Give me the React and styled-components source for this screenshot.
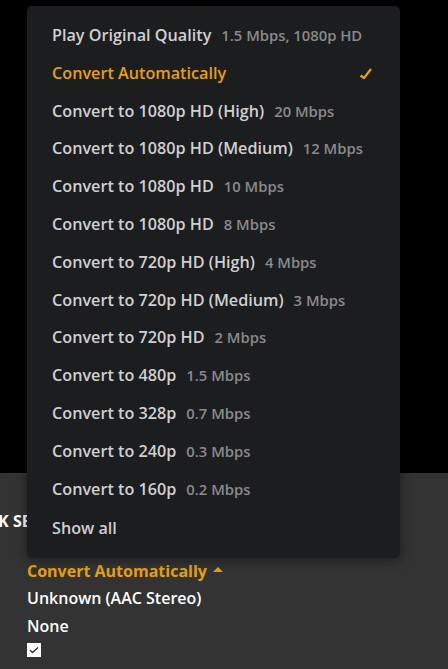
import React from 'react';
import styled, { createGlobalStyle } from 'styled-components';

const GlobalStyle = createGlobalStyle`
  html, body {
    margin: 0;
    padding: 0;
    background: #000000;
    font-family: "Open Sans", "Liberation Sans", sans-serif;
  }
`;

const Page = styled.div`
  position: relative;
  display: flex;
  flex-direction: column;
  width: 448px;
  height: 669px;
  overflow: hidden;
`;

const Video = styled.div`
  height: 473px;
  background: #000000;
`;

const Settings = styled.div`
  flex: 1;
  background: #333333;
  padding: 37px 0 0 27px;
  display: flex;
  flex-direction: column;
`;

const Heading = styled.div`
  margin-left: -101px;
  margin-bottom: 25px;
  font-size: 16px;
  font-weight: 700;
  color: #ffffff;
  line-height: 22px;
  white-space: nowrap;
`;

const Value = styled.div`
  display: flex;
  align-items: center;
  gap: 6px;
  font-size: 16px;
  font-weight: ${p => (p.$accent ? 700 : 600)};
  line-height: 20px;
  height: 27.5px;
  color: ${p => (p.$accent ? '#e5a00d' : '#ffffff')};
`;

const Caret = styled.span`
  width: 0;
  height: 0;
  border-left: 5px solid transparent;
  border-right: 5px solid transparent;
  border-bottom: 5px solid #e5a00d;
  margin-top: -2px;
`;

const Checkbox = styled.div`
  width: 14px;
  height: 14px;
  margin-top: 3px;
  background: #ffffff;
  display: flex;
  align-items: center;
  justify-content: center;
`;

const Menu = styled.div`
  position: absolute;
  top: 6px;
  left: 27px;
  width: 373px;
  box-sizing: border-box;
  padding: 11px 0 10px;
  background: #1c1d1f;
  border-radius: 5px;
  box-shadow: 0 2px 12px rgba(0, 0, 0, 0.45);
`;

const Item = styled.div`
  display: flex;
  align-items: baseline;
  height: 37.8px;
  line-height: 37.8px;
  padding: 0 26px 0 25px;
  white-space: nowrap;
  margin-top: ${p => (p.$last ? '2px' : '0')};
`;

const Label = styled.span`
  font-size: 16.2px;
  font-weight: 600;
  color: ${p => (p.$active ? '#e5a00d' : '#d0d0d0')};
`;

const Rate = styled.span`
  margin-left: 10px;
  font-size: 14.8px;
  font-weight: 600;
  color: #8a8a8a;
`;

const Tick = styled.svg`
  margin-left: auto;
  align-self: center;
`;

const options = [
  ['Play Original Quality', '1.5 Mbps, 1080p HD'],
  ['Convert Automatically', null, true],
  ['Convert to 1080p HD (High)', '20 Mbps'],
  ['Convert to 1080p HD (Medium)', '12 Mbps'],
  ['Convert to 1080p HD', '10 Mbps'],
  ['Convert to 1080p HD', '8 Mbps'],
  ['Convert to 720p HD (High)', '4 Mbps'],
  ['Convert to 720p HD (Medium)', '3 Mbps'],
  ['Convert to 720p HD', '2 Mbps'],
  ['Convert to 480p', '1.5 Mbps'],
  ['Convert to 328p', '0.7 Mbps'],
  ['Convert to 240p', '0.3 Mbps'],
  ['Convert to 160p', '0.2 Mbps'],
  ['Show all'],
];

export default function App() {
  return (
    <Page>
      <GlobalStyle />
      <Video />
      <Settings>
        <Heading>PLAYBACK SETTINGS</Heading>
        <Value $accent>
          Convert Automatically <Caret />
        </Value>
        <Value>Unknown (AAC Stereo)</Value>
        <Value>None</Value>
        <Checkbox>
          <svg width="12" height="12" viewBox="0 0 12 12">
            <path d="M2 6.2 L4.6 8.6 L10 3.4" fill="none" stroke="#333" strokeWidth="1.4" />
          </svg>
        </Checkbox>
      </Settings>
      <Menu>
        {options.map(([label, rate, active], i) => (
          <Item key={i} $last={i === options.length - 1}>
            <Label $active={active}>{label}</Label>
            {rate && <Rate>{rate}</Rate>}
            {active && (
              <Tick width="16" height="16" viewBox="0 0 16 16">
                <path d="M2.5 9.5 L6 12 L13 3" fill="none" stroke="#e5a00d" strokeWidth="2.2" strokeLinejoin="round" />
              </Tick>
            )}
          </Item>
        ))}
      </Menu>
    </Page>
  );
}
